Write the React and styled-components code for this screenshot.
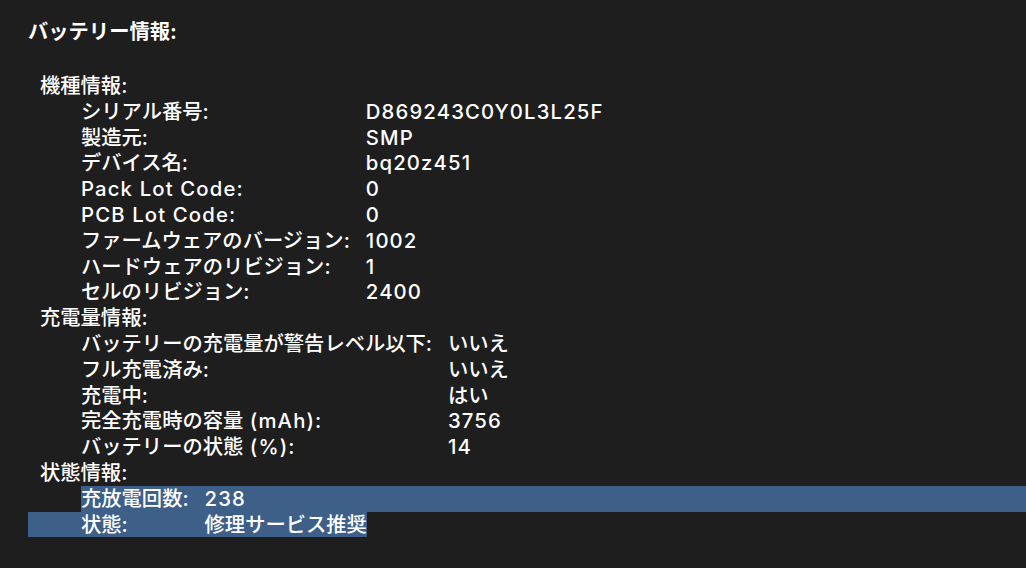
import React from "react";
import styled, { createGlobalStyle } from "styled-components";

const Global = createGlobalStyle`
  html, body {
    margin: 0;
    padding: 0;
    background: #1e1e1e;
  }
  body {
    font-family: Inter, "Noto Sans CJK JP", sans-serif;
    color: #ffffff;
    -webkit-font-smoothing: antialiased;
  }
`;

const ROW = "25.8px";
const SEL = "#3d5f88";

const Page = styled.div`
  width: 1026px;
  height: 568px;
  box-sizing: border-box;
  padding: 19px 0 0 28px;
  overflow: hidden;
`;

const Title = styled.div`
  font-size: 20.3px;
  font-weight: 700;
  line-height: 26px;
  margin-bottom: 28px;
`;

const Section = styled.div`
  display: grid;
  grid-template-columns: 53px max-content 1fr;
  font-size: 20.3px;
  font-weight: 500;
  line-height: ${ROW};
`;

const SectionHeader = styled.div`
  grid-column: 1 / -1;
  padding-left: 12px;
`;

const Row = styled.div`
  display: contents;
`;

const Indent = styled.div`
  background: ${(p) => (p.$sel ? SEL : "transparent")};
`;

const Label = styled.div`
  padding-right: 16px;
  white-space: nowrap;
  background: ${(p) => (p.$sel ? SEL : "transparent")};
`;

const Value = styled.div`
  white-space: nowrap;
  background: ${(p) => (p.$sel ? SEL : "transparent")};
`;

const ValueText = styled.span`
  display: inline-block;
  background: ${(p) => (p.$sel ? SEL : "transparent")};
`;

const Latin = styled.span`
  letter-spacing: 1.15px;
`;

function Text({ children }) {
  const parts = children.split(/([\x20-\x7e]+)/).filter(Boolean);
  return parts.map((part, i) =>
    /^[\x20-\x7e]+$/.test(part) && !/^[:\s]+$/.test(part) ? (
      <Latin key={i}>{part}</Latin>
    ) : (
      <React.Fragment key={i}>{part}</React.Fragment>
    )
  );
}

const sections = [
  {
    title: "機種情報:",
    rows: [
      ["シリアル番号:", "D869243C0Y0L3L25F"],
      ["製造元:", "SMP"],
      ["デバイス名:", "bq20z451"],
      ["Pack Lot Code:", "0"],
      ["PCB Lot Code:", "0"],
      ["ファームウェアのバージョン:", "1002"],
      ["ハードウェアのリビジョン:", "1"],
      ["セルのリビジョン:", "2400"],
    ],
  },
  {
    title: "充電量情報:",
    rows: [
      ["バッテリーの充電量が警告レベル以下:", "いいえ"],
      ["フル充電済み:", "いいえ"],
      ["充電中:", "はい"],
      ["完全充電時の容量 (mAh):", "3756"],
      ["バッテリーの状態 (%):", "14"],
    ],
  },
  {
    title: "状態情報:",
    rows: [
      ["充放電回数:", "238", "first"],
      ["状態:", "修理サービス推奨", "last"],
    ],
  },
];

export default function App() {
  return (
    <>
      <Global />
      <Page>
        <Title>バッテリー情報:</Title>
        {sections.map((s) => (
          <Section key={s.title}>
            <SectionHeader>{s.title}</SectionHeader>
            {s.rows.map(([label, value, sel]) => (
              <Row key={label}>
                <Indent $sel={sel === "last"} />
                <Label $sel={!!sel}>
                  <Text>{label}</Text>
                </Label>
                <Value $sel={sel === "first"}>
                  <ValueText $sel={sel === "last"}>
                    <Text>{value}</Text>
                  </ValueText>
                </Value>
              </Row>
            ))}
          </Section>
        ))}
      </Page>
    </>
  );
}
